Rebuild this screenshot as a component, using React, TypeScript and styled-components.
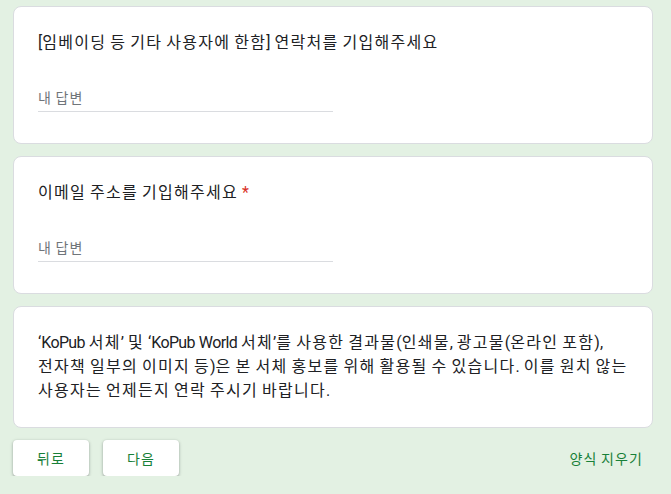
import { Fragment } from "react";
import styled, { createGlobalStyle } from "styled-components";

const GlobalStyle = createGlobalStyle`
  html, body {
    margin: 0;
    padding: 0;
    background-color: #e3f1e3;
  }
  body {
    font-family: Roboto, "Noto Sans CJK KR", Arial, sans-serif;
    color: #202124;
  }
`;

// the reference renders hangul a little wider and latin a little narrower
// than the installed fonts do, so the runs get their own tracking
const Spaced = ({ text }: { text: string }) => {
  const runs = text.match(/[\uac00-\ud7a3]+|[A-Za-z]+|[^\uac00-\ud7a3A-Za-z]+/g) ?? [];
  return (
    <>
      {runs.map((run, i) => {
        if (/[\uac00-\ud7a3]/.test(run)) return <Hangul key={i}>{run}</Hangul>;
        if (/[A-Za-z]/.test(run)) return <Latin key={i}>{run}</Latin>;
        return <Fragment key={i}>{run}</Fragment>;
      })}
    </>
  );
};

type QuestionProps = {
  title: string;
  required?: boolean;
};

const Question = ({ title, required }: QuestionProps) => (
  <Card>
    <QuestionTitle>
      <Spaced text={title} />
      {required && <Required>*</Required>}
    </QuestionTitle>
    <AnswerField>
      <AnswerPlaceholder>
        <Spaced text="내 답변" />
      </AnswerPlaceholder>
    </AnswerField>
  </Card>
);

const descriptionLines = [
  "‘KoPub 서체’ 및 ‘KoPub World 서체’를 사용한 결과물(인쇄물, 광고물(온라인 포함),",
  "전자책 일부의 이미지 등)은 본 서체 홍보를 위해 활용될 수 있습니다. 이를 원치 않는",
  "사용자는 언제든지 연락 주시기 바랍니다.",
];

const App = () => {
  return (
    <>
      <GlobalStyle />
      <Page>
        <Question title="[임베이딩 등 기타 사용자에 한함] 연락처를 기입해주세요" />
        <Question title="이메일 주소를 기입해주세요" required />
        <Card>
          <Description>
            {descriptionLines.map((line) => (
              <DescriptionLine key={line}>
                <Spaced text={line} />
              </DescriptionLine>
            ))}
          </Description>
        </Card>
        <Navigation>
          <NavButtons>
            <NavButton>
              <Spaced text="뒤로" />
            </NavButton>
            <NavButton>
              <Spaced text="다음" />
            </NavButton>
          </NavButtons>
          <ClearButton>
            <Spaced text="양식 지우기" />
          </ClearButton>
        </Navigation>
      </Page>
    </>
  );
};

const Hangul = styled.span`
  letter-spacing: 0.08em;
`;

const Latin = styled.span`
  letter-spacing: -0.04em;
`;

const Page = styled.main`
  width: 640px;
  padding: 6px 0 0 13px;
  display: flex;
  flex-direction: column;
  gap: 12px;
`;

const Card = styled.section`
  background-color: #fff;
  border: 1px solid #dadce0;
  border-radius: 8px;
  padding: 24px;
  box-sizing: border-box;
`;

const QuestionTitle = styled.div`
  height: 24px;
  font-size: 16px;
  line-height: 24px;
  color: #202124;
  white-space: nowrap;
`;

const Required = styled.span`
  color: #d93025;
  padding-left: 4px;
`;

const AnswerField = styled.div`
  width: 50%;
  height: 26px;
  margin: 30px 0 7px;
  border-bottom: 1px solid #dadce0;
  display: flex;
  align-items: center;
`;

const AnswerPlaceholder = styled.span`
  font-size: 14px;
  line-height: 20px;
  color: #70757a;
`;

const Description = styled.div`
  font-size: 16px;
  color: #202124;
`;

const DescriptionLine = styled.div`
  height: 24px;
  line-height: 24px;
  white-space: nowrap;
`;

const Navigation = styled.div`
  display: flex;
  align-items: center;
  justify-content: space-between;
`;

const NavButtons = styled.div`
  display: flex;
  gap: 14px;
`;

const NavButton = styled.button`
  height: 36px;
  padding: 0 24px;
  border: none;
  border-radius: 4px;
  background-color: #fff;
  color: #188038;
  font-family: inherit;
  font-size: 14px;
  font-weight: 400;
  box-shadow: 0 1px 2px 0 rgba(60, 64, 67, 0.3),
    0 1px 3px 1px rgba(60, 64, 67, 0.15);
  cursor: pointer;
`;

const ClearButton = styled.button`
  height: 36px;
  padding: 0 10px;
  border: none;
  background: transparent;
  color: #188038;
  font-family: inherit;
  font-size: 14px;
  font-weight: 400;
  cursor: pointer;
`;

export default App;
